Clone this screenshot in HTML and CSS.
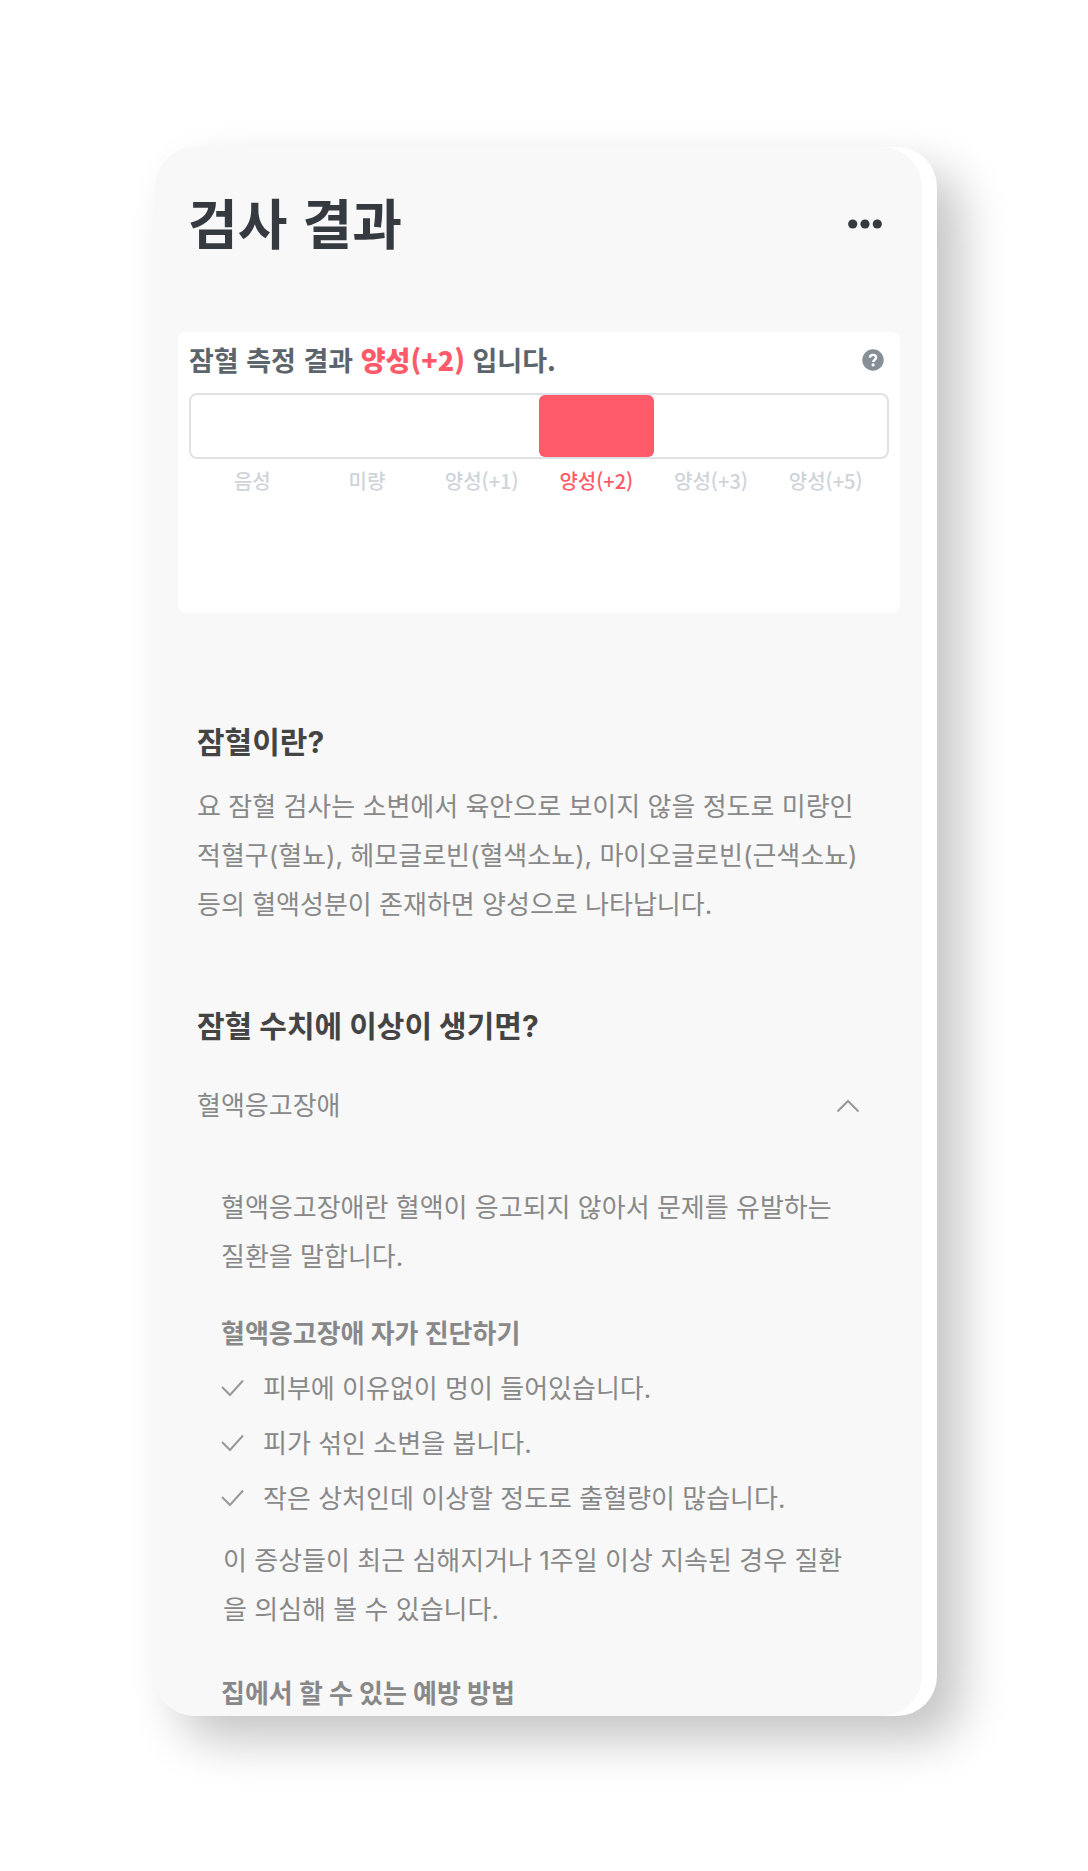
FILE: index.html
```html
<!DOCTYPE html>
<html lang="ko">
<head>
<meta charset="utf-8">
<meta name="viewport" content="width=device-width, initial-scale=1">
<title>검사 결과</title>
<link rel="stylesheet" href="styles.css">
</head>
<body>
<div class="phone">
  <main class="screen">
    <header class="header">
      <h1 class="title">검사 결과</h1>
      <button class="icon-button" type="button" aria-label="더보기">
        <svg width="34" height="10" viewBox="0 0 34 10" fill="currentColor"><circle cx="4.7" cy="5" r="4.6"/><circle cx="17" cy="5" r="4.6"/><circle cx="29.3" cy="5" r="4.6"/></svg>
      </button>
    </header>

    <section class="card">
      <div class="result">
        <p class="result-text">잠혈 측정 결과 <strong class="accent">양성(+2)</strong> 입니다.</p>
        <button class="icon-button help" type="button" aria-label="도움말">
          <svg width="22" height="22" viewBox="0 0 22 22"><circle cx="11" cy="11" r="10.7" fill="currentColor"/><path d="M7.9 8.6C8 6.9 9.3 5.9 11 5.9c1.8 0 3.1 1 3.1 2.6 0 2.2-2.9 2.4-2.9 4.6" fill="none" stroke="#fff" stroke-width="2.4"/><circle cx="11.1" cy="15.9" r="1.6" fill="#fff"/></svg>
        </button>
      </div>
      <div class="gauge">
        <span></span><span></span><span></span><span class="filled"></span><span></span><span></span>
      </div>
      <ol class="levels">
        <li>음성</li><li>미량</li><li>양성(+1)</li><li class="accent">양성(+2)</li><li>양성(+3)</li><li>양성(+5)</li>
      </ol>
    </section>

    <section class="info">
      <h2 class="heading">잠혈이란?</h2>
      <p class="intro">요 잠혈 검사는 소변에서 육안으로 보이지 않을 정도로 미량인 적혈구(혈뇨), 헤모글로빈(혈색소뇨), 마이오글로빈(근색소뇨) 등의 혈액성분이 존재하면 양성으로 나타납니다.</p>
      <h2 class="heading">잠혈 수치에 이상이 생기면?</h2>
      <button class="accordion" type="button" aria-expanded="true" aria-controls="disorder">
        <span>혈액응고장애</span>
        <svg width="24" height="14" viewBox="0 0 24 14" fill="none" stroke="#999" stroke-width="2"><path d="M1.5 12.5 12 2l10.5 10.5"/></svg>
      </button>
      <div class="panel" id="disorder">
        <p>혈액응고장애란 혈액이 응고되지 않아서 문제를 유발하는 질환을 말합니다.</p>
        <h3 class="subheading">혈액응고장애 자가 진단하기</h3>
        <ul class="checks">
          <li><svg width="23" height="20" viewBox="0 0 23 20"><path d="M1 8l8 8L22 1.5"/></svg>피부에 이유없이 멍이 들어있습니다.</li>
          <li><svg width="23" height="20" viewBox="0 0 23 20"><path d="M1 8l8 8L22 1.5"/></svg>피가 섞인 소변을 봅니다.</li>
          <li><svg width="23" height="20" viewBox="0 0 23 20"><path d="M1 8l8 8L22 1.5"/></svg>작은 상처인데 이상할 정도로 출혈량이 많습니다.</li>
        </ul>
        <p class="note">이 증상들이 최근 심해지거나 1주일 이상 지속된 경우 질환을 의심해 볼 수 있습니다.</p>
        <h3 class="subheading last">집에서 할 수 있는 예방 방법</h3>
      </div>
    </section>
  </main>
</div>
</body>
</html>
```
FILE: styles.css
```css
* { box-sizing: border-box; margin: 0; padding: 0; }

body {
  padding: 147px 151px 155px 155px;
  background: #fff;
  color: #888;
  font-family: Inter, "Noto Sans CJK KR", sans-serif;
  font-size: 26px;
  line-height: 49px;
}

button { border: 0; background: none; font: inherit; color: inherit; cursor: pointer; }
ul, ol { list-style: none; }
svg { display: block; flex: none; }

.phone {
  padding-right: 15px;
  border-radius: 40px;
  background: #fff;
  box-shadow: 24px 24px 48px rgba(0, 0, 0, 0.23);
}

.screen {
  padding: 45px 22px 2px 23px;
  border-radius: 40px;
  background: #f8f8f8;
}

.header {
  display: flex;
  align-items: center;
  justify-content: space-between;
  padding: 0 18px 0 10px;
}

.title {
  padding-bottom: 4px;
  color: #343a40;
  font-family: "Noto Sans CJK KR", sans-serif;
  font-size: 54px;
  font-weight: 700;
  line-height: 60px;
}

.icon-button { display: flex; color: #343a40; }

.card {
  margin-top: 76px;
  padding: 10px 11px 120px;
  border-radius: 8px;
  background: #fff;
  font-family: "Noto Sans CJK KR", sans-serif;
}

.result { display: flex; align-items: center; justify-content: space-between; padding-right: 5px; }
.result-text { color: #5c656c; font-size: 27px; font-weight: 700; line-height: 36px; }
.help { color: #868e96; }
.result-text .accent, .levels .accent { color: #ff5a69; }

.gauge {
  display: grid;
  grid-template-columns: repeat(6, 1fr);
  height: 66px;
  margin-top: 15px;
  padding: 0 4px;
  border: 2px solid #dee2e6;
  border-radius: 8px;
}
.filled { border-radius: 6px; background: #ff5a69; }

.levels {
  display: grid;
  grid-template-columns: repeat(6, 1fr);
  margin-top: 10px;
  padding: 0 6px;
  color: #ced4da;
  font-size: 20px;
  font-weight: 500;
  line-height: 24px;
  text-align: center;
}

.info { padding: 109px 20px 0 19px; }
.heading { color: #444; font-size: 30px; font-weight: 700; line-height: 40px; }
.intro { margin: 20px 0 77px; }

.accordion {
  display: flex;
  align-items: center;
  justify-content: space-between;
  width: 100%;
  margin-top: 35px;
  padding-right: 20px;
}

.panel { padding: 53px 24px 0; }
.subheading { margin-top: 33px; font-size: 26px; font-weight: 700; line-height: 40px; }
.checks { display: grid; gap: 6px; margin-top: 10px; }
.checks li { display: flex; align-items: center; gap: 19px; }
.checks svg { fill: none; stroke: #999; stroke-width: 2; }
.note { margin-top: 13px; padding-left: 2px; }
.last { margin-top: 40px; }
```
